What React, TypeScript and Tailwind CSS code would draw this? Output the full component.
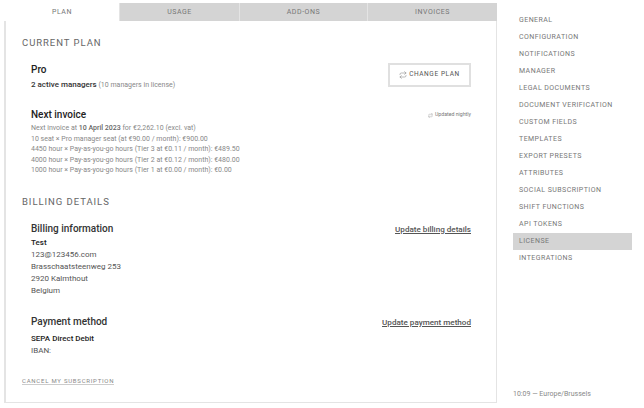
import { Repeat } from "lucide-react";

const tabs = ["PLAN", "USAGE", "ADD-ONS", "INVOICES"];

const menu = [
  "GENERAL",
  "CONFIGURATION",
  "NOTIFICATIONS",
  "MANAGER",
  "LEGAL DOCUMENTS",
  "DOCUMENT VERIFICATION",
  "CUSTOM FIELDS",
  "TEMPLATES",
  "EXPORT PRESETS",
  "ATTRIBUTES",
  "SOCIAL SUBSCRIPTION",
  "SHIFT FUNCTIONS",
  "API TOKENS",
  "LICENSE",
  "INTEGRATIONS",
];

const invoiceLines = [
  "10 seat × Pro manager seat (at €90.00 / month): €900.00",
  "4450 hour × Pay-as-you-go hours (Tier 3 at €0.11 / month): €489.50",
  "4000 hour × Pay-as-you-go hours (Tier 2 at €0.12 / month): €480.00",
  "1000 hour × Pay-as-you-go hours (Tier 1 at €0.00 / month): €0.00",
];

const tabWidths = ["w-[114px]", "w-[120px]", "w-[128px]", "flex-1"];

export default function App() {
  return (
    <div className="flex h-[408px] w-[644px] overflow-hidden bg-white font-['Roboto',sans-serif] text-[#333]">
      <div className="mt-[3px] mb-[5px] ml-1 flex w-[493px] flex-col">
        <div className="flex h-[18px] pl-[1px]">
          {tabs.map((tab, index) => (
            <div
              key={tab}
              className={`flex items-center justify-center text-[7px] tracking-[0.55px] text-[#777] ${tabWidths[index]} ${
                index === 0 ? "bg-white" : "border-l border-[#e4e4e4] bg-[#d4d4d4]"
              }`}
            >
              {tab}
            </div>
          ))}
        </div>

        <div className="flex flex-1 flex-col border-r border-b border-l-2 border-[#e4e4e4] pr-[25px] pl-4">
          <h2 className="mt-[16px] text-[9.5px] leading-[12px] tracking-[0.95px] text-[#666]">CURRENT PLAN</h2>

          <div className="mt-[15px] flex justify-between pl-[9px]">
            <div>
              <p className="text-[10px] leading-[12px] font-medium text-[#222]">Pro</p>
              <p className="mt-[3px] text-[7px] leading-[12px] text-[#888]">
                <span className="text-[8px] font-medium text-[#333]">2 active managers</span> (10 managers in license)
              </p>
            </div>
            <button className="-mt-[1px] flex h-[24px] w-[83px] items-center justify-center gap-[2px] border-2 border-[#e0e0e0] text-[6.5px] tracking-[0.6px] text-[#555]">
              <Repeat size={8} className="text-[#999]" />
              CHANGE PLAN
            </button>
          </div>

          <div className="mt-[18px] flex justify-between pl-[9px]">
            <div className="text-[7px] leading-[10.5px] text-[#888]">
              <p className="mb-[2px] text-[10px] leading-[12px] font-medium text-[#222]">Next invoice</p>
              <p>
                Next invoice at <span className="font-medium text-[#666]">10 April 2023</span> for €2,262.10 (excl. vat)
              </p>
              {invoiceLines.map((line) => (
                <p key={line}>{line}</p>
              ))}
            </div>
            <span className="mt-[2px] flex h-[8px] items-center gap-[2px] text-[5.2px] text-[#777]">
              <Repeat size={5} className="text-[#999]" />
              Updated nightly
            </span>
          </div>

          <h2 className="mt-[20px] text-[9.5px] leading-[12px] tracking-[0.95px] text-[#666]">BILLING DETAILS</h2>

          <div className="mt-[15px] flex justify-between pl-[9px]">
            <p className="text-[10px] leading-[12px] font-medium text-[#333]">Billing information</p>
            <a className="text-[8.1px] leading-[12px] font-medium text-[#555] underline">Update billing details</a>
          </div>
          <div className="mt-[2px] pl-[9px] text-[8px] leading-[12px] text-[#555]">
            <p className="font-medium text-[#222]">Test</p>
            <p>123@123456.com</p>
            <p>Brasschaatsteenweg 253</p>
            <p>2920 Kalmthout</p>
            <p>Belgium</p>
          </div>

          <div className="mt-[19px] flex justify-between pl-[9px]">
            <p className="text-[10px] leading-[12px] font-medium text-[#333]">Payment method</p>
            <a className="text-[8.1px] leading-[12px] font-medium text-[#555] underline">Update payment method</a>
          </div>
          <div className="mt-[5px] pl-[9px] text-[8px] leading-[12px] text-[#555]">
            <p className="font-medium text-[#222]">SEPA Direct Debit</p>
            <p>IBAN:</p>
          </div>

          <a className="mt-[20px] w-fit border-b border-[#ccc] text-[6px] leading-[7px] tracking-[0.75px] text-[#888]">
            CANCEL MY SUBSCRIPTION
          </a>
        </div>
      </div>

      <div className="ml-4 flex w-[119px] flex-col pt-[12px] pb-[9px]">
        {menu.map((item) => (
          <div
            key={item}
            className={`flex h-[17px] items-center pl-[6px] text-[7px] tracking-[0.45px] text-[#777] ${
              item === "LICENSE" ? "bg-[#d4d4d4]" : ""
            }`}
          >
            {item}
          </div>
        ))}
        <p className="mt-auto text-[7px] leading-[10px] text-[#888]">10:09 — Europe/Brussels</p>
      </div>
    </div>
  );
}
